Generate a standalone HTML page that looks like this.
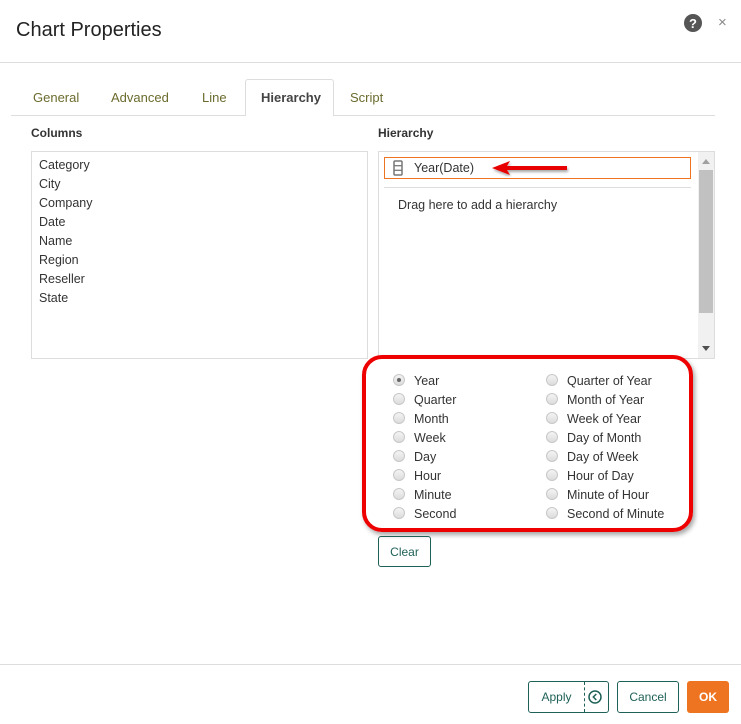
<!DOCTYPE html>
<html><head><meta charset="utf-8"><style>
*{box-sizing:border-box;margin:0;padding:0}
body{width:741px;height:724px;background:#fff;font-family:"Liberation Sans",sans-serif;color:#333;position:relative;overflow:hidden}
.a{position:absolute;white-space:nowrap}
.t{font-size:13px;color:#6b6b2e}
.li{font-size:12.5px;color:#333}
.rd{position:absolute;width:12px;height:12px;border-radius:50%;border:1px solid #c8c8c8;background:linear-gradient(#f4f4f4,#dcdcdc)}
.btn{position:absolute;border:1px solid #1f6158;border-radius:3px;color:#1f6158;font-size:12px;text-align:center}
</style></head><body>
<div class="a" style="left:16px;top:19px;font-size:20px;color:#222">Chart Properties</div>
<svg class="a" style="left:684px;top:14px" width="18" height="18"><circle cx="9" cy="9" r="9" fill="#555"/><text x="9" y="14" font-size="13" font-weight="bold" fill="#fff" text-anchor="middle" font-family="Liberation Sans">?</text></svg>
<div class="a" style="left:718px;top:14px;font-size:15px;color:#888">×</div>
<div class="a" style="left:0;top:62px;width:741px;height:1px;background:#ddd"></div>
<div class="a" style="left:11px;top:115px;width:704px;height:1px;background:#ddd"></div>
<div class="a" style="left:245px;top:79px;width:89px;height:37px;border:1px solid #ddd;border-bottom:none;border-radius:3px 3px 0 0;background:#fff"></div>
<div class="a t" style="left:33px;top:90px">General</div>
<div class="a t" style="left:111px;top:90px">Advanced</div>
<div class="a t" style="left:202px;top:90px">Line</div>
<div class="a t" style="left:261px;top:90px;font-weight:bold;color:#444">Hierarchy</div>
<div class="a t" style="left:350px;top:90px">Script</div>
<div class="a" style="left:31px;top:126px;font-size:12px;font-weight:bold">Columns</div>
<div class="a" style="left:378px;top:126px;font-size:12px;font-weight:bold">Hierarchy</div>
<div class="a" style="left:31px;top:151px;width:337px;height:208px;border:1px solid #ddd"></div>
<div class="a li" style="left:39px;top:156px;line-height:19px">Category<br>City<br>Company<br>Date<br>Name<br>Region<br>Reseller<br>State</div>
<div class="a" style="left:378px;top:151px;width:337px;height:208px;border:1px solid #ddd"></div>
<div class="a" style="left:698px;top:152px;width:16px;height:206px;background:#f1f1f1"></div>
<div class="a" style="left:699px;top:170px;width:14px;height:143px;background:#c1c1c1"></div>
<div class="a" style="left:702px;top:159px;border:4px solid transparent;border-bottom:5px solid #a0a0a0;border-top:none"></div>
<div class="a" style="left:702px;top:346px;border:4px solid transparent;border-top:5px solid #505050;border-bottom:none"></div>
<div class="a" style="left:384px;top:157px;width:307px;height:22px;border:1px solid #ee7421"></div>
<svg class="a" style="left:393px;top:160px" width="10" height="16"><rect x="1" y="1" width="8" height="14" rx="1" fill="none" stroke="#777" stroke-width="1.5"/><line x1="1" y1="5.7" x2="9" y2="5.7" stroke="#777" stroke-width="1.3"/><line x1="1" y1="10.3" x2="9" y2="10.3" stroke="#777" stroke-width="1.3"/></svg>
<div class="a li" style="left:414px;top:161px">Year(Date)</div>
<svg class="a" style="left:488px;top:158px" width="84" height="22"><defs><filter id="s"><feDropShadow dx="1" dy="2" stdDeviation="1.2" flood-opacity="0.35"/></filter></defs><g filter="url(#s)"><path d="M4 10 L22 3 L19 8 L79 8 L79 12 L19 12 L22 17 Z" fill="#e80000"/></g></svg>
<div class="a" style="left:384px;top:187px;width:307px;height:1px;background:#ddd"></div>
<div class="a li" style="left:398px;top:198px">Drag here to add a hierarchy</div>
<div class="a" style="left:362px;top:355px;width:331px;height:177px;border:4px solid #ee0000;border-radius:20px;box-shadow:2px 3px 5px rgba(0,0,0,.35)"></div>
<div class="rd" style="left:393px;top:374px"><div style="position:absolute;left:3px;top:3px;width:4px;height:4px;border-radius:50%;background:#666"></div></div>
<div class="rd" style="left:393px;top:393px"></div><div class="rd" style="left:393px;top:412px"></div><div class="rd" style="left:393px;top:431px"></div><div class="rd" style="left:393px;top:450px"></div><div class="rd" style="left:393px;top:469px"></div><div class="rd" style="left:393px;top:488px"></div><div class="rd" style="left:393px;top:507px"></div>
<div class="rd" style="left:546px;top:374px"></div><div class="rd" style="left:546px;top:393px"></div><div class="rd" style="left:546px;top:412px"></div><div class="rd" style="left:546px;top:431px"></div><div class="rd" style="left:546px;top:450px"></div><div class="rd" style="left:546px;top:469px"></div><div class="rd" style="left:546px;top:488px"></div><div class="rd" style="left:546px;top:507px"></div>
<div class="a li" style="left:414px;top:372px;line-height:19px">Year<br>Quarter<br>Month<br>Week<br>Day<br>Hour<br>Minute<br>Second</div>
<div class="a li" style="left:567px;top:372px;line-height:19px">Quarter of Year<br>Month of Year<br>Week of Year<br>Day of Month<br>Day of Week<br>Hour of Day<br>Minute of Hour<br>Second of Minute</div>
<div class="btn" style="left:378px;top:536px;width:53px;height:31px;line-height:31px">Clear</div>
<div class="a" style="left:0;top:664px;width:741px;height:1px;background:#ddd"></div>
<div class="btn" style="left:528px;top:681px;width:81px;height:32px"><div style="position:absolute;left:0;top:0;width:55px;line-height:30px">Apply</div><div style="position:absolute;left:55px;top:0;height:30px;border-left:1px dashed #1f6158"></div><svg style="position:absolute;left:59px;top:8px" width="14" height="14"><circle cx="7" cy="7" r="6" fill="none" stroke="#1f6158" stroke-width="1.5"/><path d="M8.3 4 L5.3 7 L8.3 10" fill="none" stroke="#1f6158" stroke-width="1.5"/></svg></div>
<div class="btn" style="left:617px;top:681px;width:62px;height:32px;line-height:30px">Cancel</div>
<div class="btn" style="left:687px;top:681px;width:42px;height:32px;line-height:32px;background:#ee7421;border:none;color:#fff;font-weight:bold">OK</div>
</body></html>
